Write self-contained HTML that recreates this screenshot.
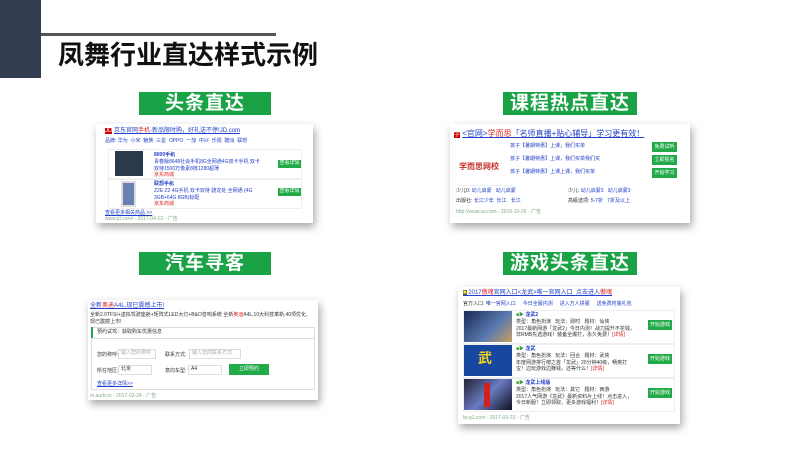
<!DOCTYPE html>
<html><head><meta charset="utf-8"><style>
*{margin:0;padding:0;box-sizing:border-box}
body{width:800px;height:450px;background:#fff;position:relative;overflow:hidden;font-family:"Liberation Sans","Noto Sans CJK SC",sans-serif}
.a{position:absolute}
.lbl{position:absolute;background:#1aa346;color:#fff;font-weight:bold;font-size:19px;text-align:center;line-height:23px;height:23px;letter-spacing:1px}
.card{position:absolute;background:#fff;box-shadow:2px 4px 8px rgba(0,0,0,.35);font-size:5px;color:#333;line-height:1.3}
.bl{color:#2440c8}
.rd{color:#d22}
.gr{color:#3a9a3a}
.btn{position:absolute;background:#22aa48;color:#fff;font-size:5px;text-align:center}
.row{position:absolute;border:1px solid #eee}
</style></head><body>
<div class="a" style="left:0;top:0;width:41px;height:78px;background:#333e50"></div>
<div class="a" style="left:41px;top:33px;width:235px;height:3px;background:#555"></div>
<div class="a" style="left:58px;top:39px;font-size:26px;font-weight:bold;color:#111;line-height:32px">凤舞行业直达样式示例</div>

<div class="lbl" style="left:139px;top:92px;width:132px">头条直达</div>
<div class="lbl" style="left:503px;top:92px;width:134px">课程热点直达</div>
<div class="lbl" style="left:139px;top:252px;width:132px">汽车寻客</div>
<div class="lbl" style="left:503px;top:252px;width:134px">游戏头条直达</div>

<!-- card1 -->
<div class="card" style="left:96px;top:124px;width:217px;height:99px">
<div class="a" style="left:9px;top:4px;font-size:6px"><span style="background:#c00;color:#fff">JD</span> <span class="bl" style="text-decoration:underline">京东官网<span class="rd">手机</span>-新品限时购，好礼送不停!JD.com</span></div>
<div class="a bl" style="left:9px;top:14px">品牌: 华为 &nbsp;小米 &nbsp;魅族 &nbsp;三星 &nbsp;OPPO &nbsp;一加 &nbsp;中兴 &nbsp;乐视 &nbsp;酷派 &nbsp;联想</div>
<div class="row" style="left:12px;top:25px;width:194px;height:30px"></div>
<div class="a" style="left:19px;top:27px;width:28px;height:25px;background:#2a3a4a"></div>
<div class="a bl" style="left:58px;top:28px;font-weight:bold">8000手机</div>
<div class="a bl" style="left:58px;top:35px;width:110px">青春版8648社会手机8G全网通4G双卡手机 双卡双待1500万像素8核1280超薄</div>
<div class="a rd" style="left:58px;top:48px">京东商城</div>
<div class="btn" style="left:182px;top:36px;width:23px;height:8px">查看详情</div>
<div class="row" style="left:12px;top:55px;width:194px;height:30px"></div>
<div class="a" style="left:25px;top:57px;width:15px;height:26px;background:#6a80b0;border:2px solid #ddd"></div>
<div class="a bl" style="left:58px;top:57px;font-weight:bold">联想手机</div>
<div class="a bl" style="left:58px;top:64px;width:110px">Z2E Z2 4G手机 双卡双待 骁龙处 全网通 (4G 3GB+64G 8GB)标配</div>
<div class="a rd" style="left:58px;top:77px">京东商城</div>
<div class="btn" style="left:182px;top:64px;width:23px;height:8px">查看详情</div>
<div class="a bl" style="left:9px;top:86px;text-decoration:underline">查看更多相关商品 &gt;&gt;</div>
<div class="a gr" style="left:9px;top:92px;color:#8a8">www.jd.com/ - 2017-04-12 - 广告</div>
</div>

<!-- card2 -->
<div class="card" style="left:450px;top:124px;width:240px;height:99px">
<div class="a" style="left:4px;top:5px;font-size:8px"><span style="background:#c00;color:#fff;font-size:6px">学</span> <span class="bl" style="text-decoration:underline">&lt;官网&gt;<span class="rd">学而思</span>「名师直播+贴心辅导」学习更有效！</span></div>
<div class="a" style="left:9px;top:38px;color:#c8302a;font-size:8px;font-weight:bold">学而思网校</div>
<div class="a" style="left:8px;top:61px;width:55px;height:1px;background:#eee"></div>
<div class="a bl" style="left:60px;top:19px">孩子【暑期特惠】上课，我们买单</div>
<div class="a bl" style="left:60px;top:32px">孩子【暑期特惠】上课，我们买单我们买</div>
<div class="a bl" style="left:60px;top:45px">孩子【暑期特惠】上课上课，我们买单</div>
<div class="btn" style="left:202px;top:18px;width:25px;height:10px;line-height:10px">免费试听</div>
<div class="btn" style="left:202px;top:31px;width:25px;height:10px;line-height:10px">立即报名</div>
<div class="btn" style="left:202px;top:44px;width:25px;height:10px;line-height:10px">开始学习</div>
<div class="a" style="left:6px;top:64px">少儿0: <span class="bl">幼儿启蒙 &nbsp; 幼儿启蒙</span></div>
<div class="a" style="left:6px;top:74px">出版社: <span class="bl">长江少年 &nbsp;长江 &nbsp; 长江</span></div>
<div class="a" style="left:118px;top:64px">少儿: <span class="bl">幼儿启蒙3 &nbsp; 幼儿启蒙3</span></div>
<div class="a" style="left:118px;top:74px">高級选项: <span class="bl">5-7折 &nbsp; 7折及以上</span></div>
<div class="a" style="left:6px;top:85px;color:#8a8">http://www.so.com - 2016-10-26 - 广告</div>
</div>

<!-- card3 -->
<div class="card" style="left:88px;top:300px;width:230px;height:100px">
<div class="a bl" style="left:2px;top:3px;font-size:6px;text-decoration:underline">全新<span class="rd">奥迪</span>A4L,现已震撼上市!</div>
<div class="a" style="left:2px;top:12px;width:222px">全新2.0TFSI+虚拟驾驶座舱+矩阵式LED大灯+B&amp;O音响系统 全新<span class="rd">奥迪</span>A4L,10大科技革新,40项优化,现已震撼上市!</div>
<div class="a" style="left:3px;top:27px;width:224px;height:63px;border:1px solid #ddd"></div>
<div class="a" style="left:3px;top:27px;width:2px;height:11px;background:#22aa48"></div>
<div class="a" style="left:9px;top:29px">预约试驾：获取购车优惠信息</div>
<div class="a" style="left:3px;top:38px;width:224px;height:1px;background:#ddd"></div>
<div class="a" style="left:9px;top:52px">您的称呼:</div>
<div class="a" style="left:30px;top:49px;width:38px;height:10px;border:1px solid #ddd;color:#aaa;padding-left:2px">输入您的称呼</div>
<div class="a" style="left:77px;top:52px">联系方式:</div>
<div class="a" style="left:101px;top:49px;width:52px;height:10px;border:1px solid #ddd;color:#aaa;padding-left:2px">输入您的联系方式</div>
<div class="a" style="left:9px;top:68px">所在地区:</div>
<div class="a" style="left:30px;top:65px;width:34px;height:10px;border:1px solid #ddd;padding-left:2px">北京</div>
<div class="a" style="left:77px;top:68px">意向车型:</div>
<div class="a" style="left:100px;top:65px;width:34px;height:10px;border:1px solid #ddd;padding-left:2px">A4</div>
<div class="btn" style="left:141px;top:64px;width:40px;height:11px;line-height:11px">立即预约</div>
<div class="a bl" style="left:9px;top:81px;text-decoration:underline">查看更多详情&gt;&gt;</div>
<div class="a" style="left:2px;top:93px;color:#8a8">m.audi.cn - 2017-03-24 - 广告</div>
</div>

<!-- card4 -->
<div class="card" style="left:458px;top:287px;width:222px;height:137px">
<div class="a bl" style="left:5px;top:3px;font-size:6px;text-decoration:underline"><span style="background:#553;color:#ee3;text-decoration:none">■</span> 2017<span class="rd">傲魂</span>官网入口&lt;龙武&gt;唯一官网入口_点击进入<span class="rd">傲魂</span></div>
<div class="a" style="left:5px;top:14px">官方入口: <span class="bl">唯一官网入口 &nbsp; &nbsp; 今日全服内测 &nbsp; &nbsp; 进入万人拼服 &nbsp; &nbsp; 送免费时装礼包</span></div>
<div class="row" style="left:5px;top:23px;width:212px;height:34px"></div>
<div class="a" style="left:6px;top:24px;width:48px;height:31px;background:linear-gradient(135deg,#1a2a55,#5a7ab0 60%,#c9a060)"></div>
<div class="a bl" style="left:58px;top:25px;font-weight:bold"><span class="gr">■▶</span> 龙武2</div>
<div class="a" style="left:58px;top:32px;width:120px">类型：角色扮演 &nbsp; 玩法：即时 &nbsp; 题材：仙侠<br>2017最新网游「龙武2」今日内测！战力提升不花钱，非RMB先选游戏！装备全爆打，永久免费！<span class="rd">[详情]</span></div>
<div class="btn" style="left:190px;top:33px;width:24px;height:10px;line-height:10px">开始游戏</div>
<div class="row" style="left:5px;top:57px;width:212px;height:34px"></div>
<div class="a" style="left:6px;top:58px;width:48px;height:31px;background:#1847a0"></div>
<div class="a" style="left:20px;top:62px;color:#f0d020;font-size:14px;font-weight:bold">武</div>
<div class="a bl" style="left:58px;top:59px;font-weight:bold"><span class="gr">■▶</span> 龙武</div>
<div class="a" style="left:58px;top:66px;width:120px">类型：角色扮演 &nbsp; 玩法：回合 &nbsp; 题材：武侠<br>年度网游排行榜之首「龙武」20分钟40级，畅爽打宝！边玩游戏边赚钱，还等什么！<span class="rd">[详情]</span></div>
<div class="btn" style="left:190px;top:67px;width:24px;height:10px;line-height:10px">开始游戏</div>
<div class="row" style="left:5px;top:91px;width:212px;height:34px"></div>
<div class="a" style="left:6px;top:92px;width:48px;height:31px;background:linear-gradient(135deg,#223,#6a7ac0 50%,#112)"></div>
<div class="a" style="left:26px;top:96px;width:6px;height:24px;background:#d02020"></div>
<div class="a bl" style="left:58px;top:93px;font-weight:bold"><span class="gr">■▶</span> 龙武上线版</div>
<div class="a" style="left:58px;top:100px;width:120px">类型：角色扮演 &nbsp; 玩法：其它 &nbsp; 题材：西游<br>2017人气网游《龙武》最新资料片上线！点击进入，今日新服！立即领取，更多游戏福利！<span class="rd">[详情]</span></div>
<div class="btn" style="left:190px;top:101px;width:24px;height:10px;line-height:10px">开始游戏</div>
<div class="a" style="left:5px;top:128px;color:#8a8">lw.q1.com - 2017-03-23 - 广告</div>
</div>
</body></html>
